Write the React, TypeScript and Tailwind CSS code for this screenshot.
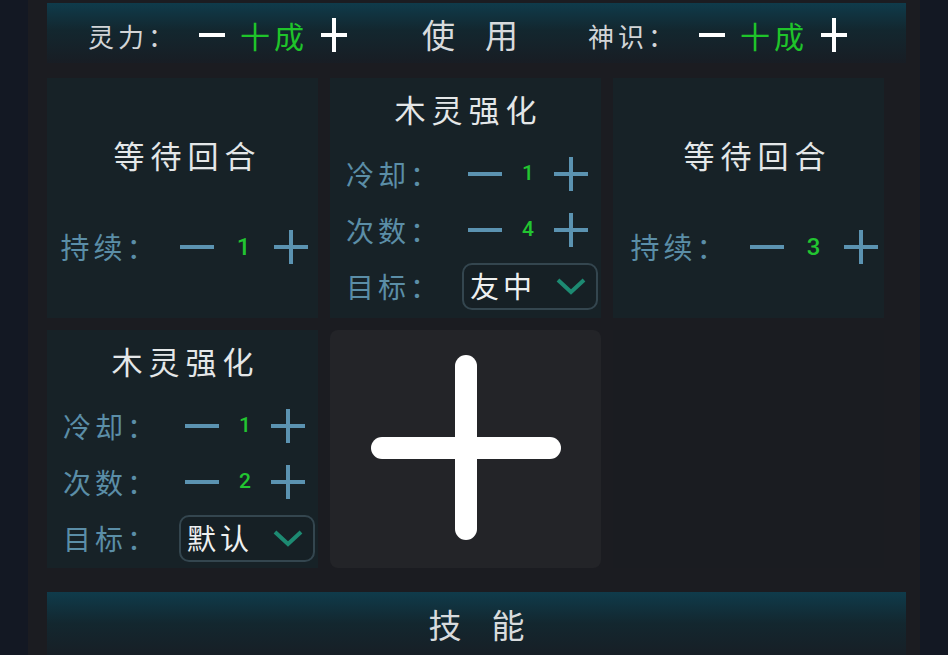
import React from "react";

const cjk = { fontFamily: '"Noto Sans CJK SC", "Noto Sans", sans-serif' };
const num = { fontFamily: 'Roboto, "Liberation Sans", sans-serif' };

function Minus({ color = "#5b93b1", w = 36 }: { color?: string; w?: number }) {
  return (
    <svg width={w} height="36" viewBox={`0 0 ${w} 36`}>
      <line x1="1" y1="18" x2={w - 1} y2="18" stroke={color} strokeWidth="4" />
    </svg>
  );
}
function Plus({ color = "#5b93b1", w = 36 }: { color?: string; w?: number }) {
  return (
    <svg width={w} height="36" viewBox={`0 0 ${w} 36`}>
      <line x1="1" y1="18" x2={w - 1} y2="18" stroke={color} strokeWidth="4" />
      <line x1={w / 2} y1="1" x2={w / 2} y2="35" stroke={color} strokeWidth="4" />
    </svg>
  );
}

function Stepper({ label, value }: { label: string; value: string }) {
  return (
    <div className="flex items-center h-[56px]">
      <span className="text-[29px] text-[#5b8ea7] tracking-[4px] w-[118px]" style={cjk}>
        {label}：
      </span>
      <Minus />
      <span className="w-[58px] text-center text-[24px] font-medium text-[#22c531]" style={num}>
        {value}
      </span>
      <Plus />
    </div>
  );
}

function SmallStepper({ label, value }: { label: string; value: string }) {
  return (
    <div className="flex items-center h-[56px]">
      <span className="text-[28px] text-[#5b8ea7] tracking-[4px] w-[121px]" style={cjk}>
        {label}：
      </span>
      <Minus />
      <span className="w-[50px] text-center text-[21px] font-medium text-[#22c531]" style={num}>
        {value}
      </span>
      <Plus />
    </div>
  );
}

function Dropdown({ label, value }: { label: string; value: string }) {
  return (
    <div className="flex items-center h-[56px]">
      <span className="text-[28px] text-[#5b8ea7] tracking-[4px] w-[116px]" style={cjk}>
        {label}：
      </span>
      <div className="flex items-center justify-between w-[136px] h-[47px] rounded-[10px] border-2 border-[#34464f] bg-[#162025] pl-[6px] pr-[10px]">
        <span className="text-[29px] text-[#eef0f0] tracking-[4px]" style={cjk}>
          {value}
        </span>
        <svg width="30" height="20" viewBox="0 0 30 20">
          <polyline points="2,4 15,16 28,4" fill="none" stroke="#1d8a72" strokeWidth="4" />
        </svg>
      </div>
    </div>
  );
}

function WaitCard({ value, shift = 0 }: { value: string; shift?: number }) {
  return (
    <div className="bg-[#172227] flex flex-col items-center pt-[54px]" style={{ paddingLeft: 4 + shift }}>
      <div className="text-[31px] text-[#e4e7e8] tracking-[6px] h-[46px] leading-[46px] pl-[6px]" style={cjk}>
        等待回合
      </div>
      <div className="mt-[41px]">
        <Stepper label="持续" value={value} />
      </div>
    </div>
  );
}

function BuffCard({ count, target }: { count: string; target: string }) {
  return (
    <div className="bg-[#172227] flex flex-col pl-[16px] pt-[8px]">
      <div className="text-[31px] text-[#e4e7e8] tracking-[6px] h-[46px] leading-[46px] text-center pr-[16px] pl-[6px]" style={cjk}>
        木灵强化
      </div>
      <div className="mt-[14px]">
        <SmallStepper label="冷却" value="1" />
        <SmallStepper label="次数" value={count} />
        <Dropdown label="目标" value={target} />
      </div>
    </div>
  );
}

export default function App() {
  return (
    <div className="w-[948px] h-[655px] bg-[#131823] overflow-hidden flex">
      <div className="ml-[28px] w-[892px] h-full bg-[#1b1c21] pl-[19px] flex flex-col">
        <div
          className="mt-[3px] w-[859px] h-[60px] shrink-0 flex items-center pt-[4px]"
          style={{ background: "linear-gradient(to bottom, #0f3b4b 0%, #13272f 45%, #181d24 100%)" }}
        >
          <div className="flex items-center ml-[41px]">
            <span className="text-[26px] text-[#d2d5d7] tracking-[4px]" style={cjk}>灵力：</span>
            <span className="ml-[20px]"><Minus color="#ffffff" w={28} /></span>
            <span className="ml-[14px] text-[30px] text-[#1fc42a] tracking-[4px]" style={cjk}>十成</span>
            <span className="ml-[12px]"><Plus color="#ffffff" w={28} /></span>
          </div>
          <span className="ml-[74px] text-[33px] text-[#d8dbdd] tracking-[30px]" style={cjk}>使用</span>
          <div className="flex items-center ml-[40px]">
            <span className="text-[26px] text-[#d2d5d7] tracking-[4px]" style={cjk}>神识：</span>
            <span className="ml-[20px]"><Minus color="#ffffff" w={28} /></span>
            <span className="ml-[14px] text-[30px] text-[#1fc42a] tracking-[4px]" style={cjk}>十成</span>
            <span className="ml-[12px]"><Plus color="#ffffff" w={28} /></span>
          </div>
        </div>

        <div className="mt-[15px] grid grid-cols-[271px_271px_271px] grid-rows-[240px_238px] gap-[12px] shrink-0">
          <WaitCard value="1" />
          <BuffCard count="4" target="友中" />
          <WaitCard value="3" shift={8} />
          <BuffCard count="2" target="默认" />
          <div className="bg-[#232428] rounded-[8px] flex items-center justify-center">
            <svg width="200" height="200" viewBox="0 0 200 200">
              <line x1="16" y1="99" x2="184" y2="99" stroke="#ffffff" strokeWidth="22" strokeLinecap="round" />
              <line x1="100" y1="17" x2="100" y2="180" stroke="#ffffff" strokeWidth="22" strokeLinecap="round" />
            </svg>
          </div>
          <div className="bg-[#1a1c21]" />
        </div>

        <div
          className="mt-[24px] w-[859px] h-[70px] shrink-0 flex items-start justify-center pt-[8px]"
          style={{ background: "linear-gradient(to bottom, #0f3b4b 0%, #13272f 45%, #181d24 100%)" }}
        >
          <span className="text-[33px] text-[#d8dbdd] tracking-[30px] pl-[30px]" style={cjk}>技能</span>
        </div>
      </div>
    </div>
  );
}
